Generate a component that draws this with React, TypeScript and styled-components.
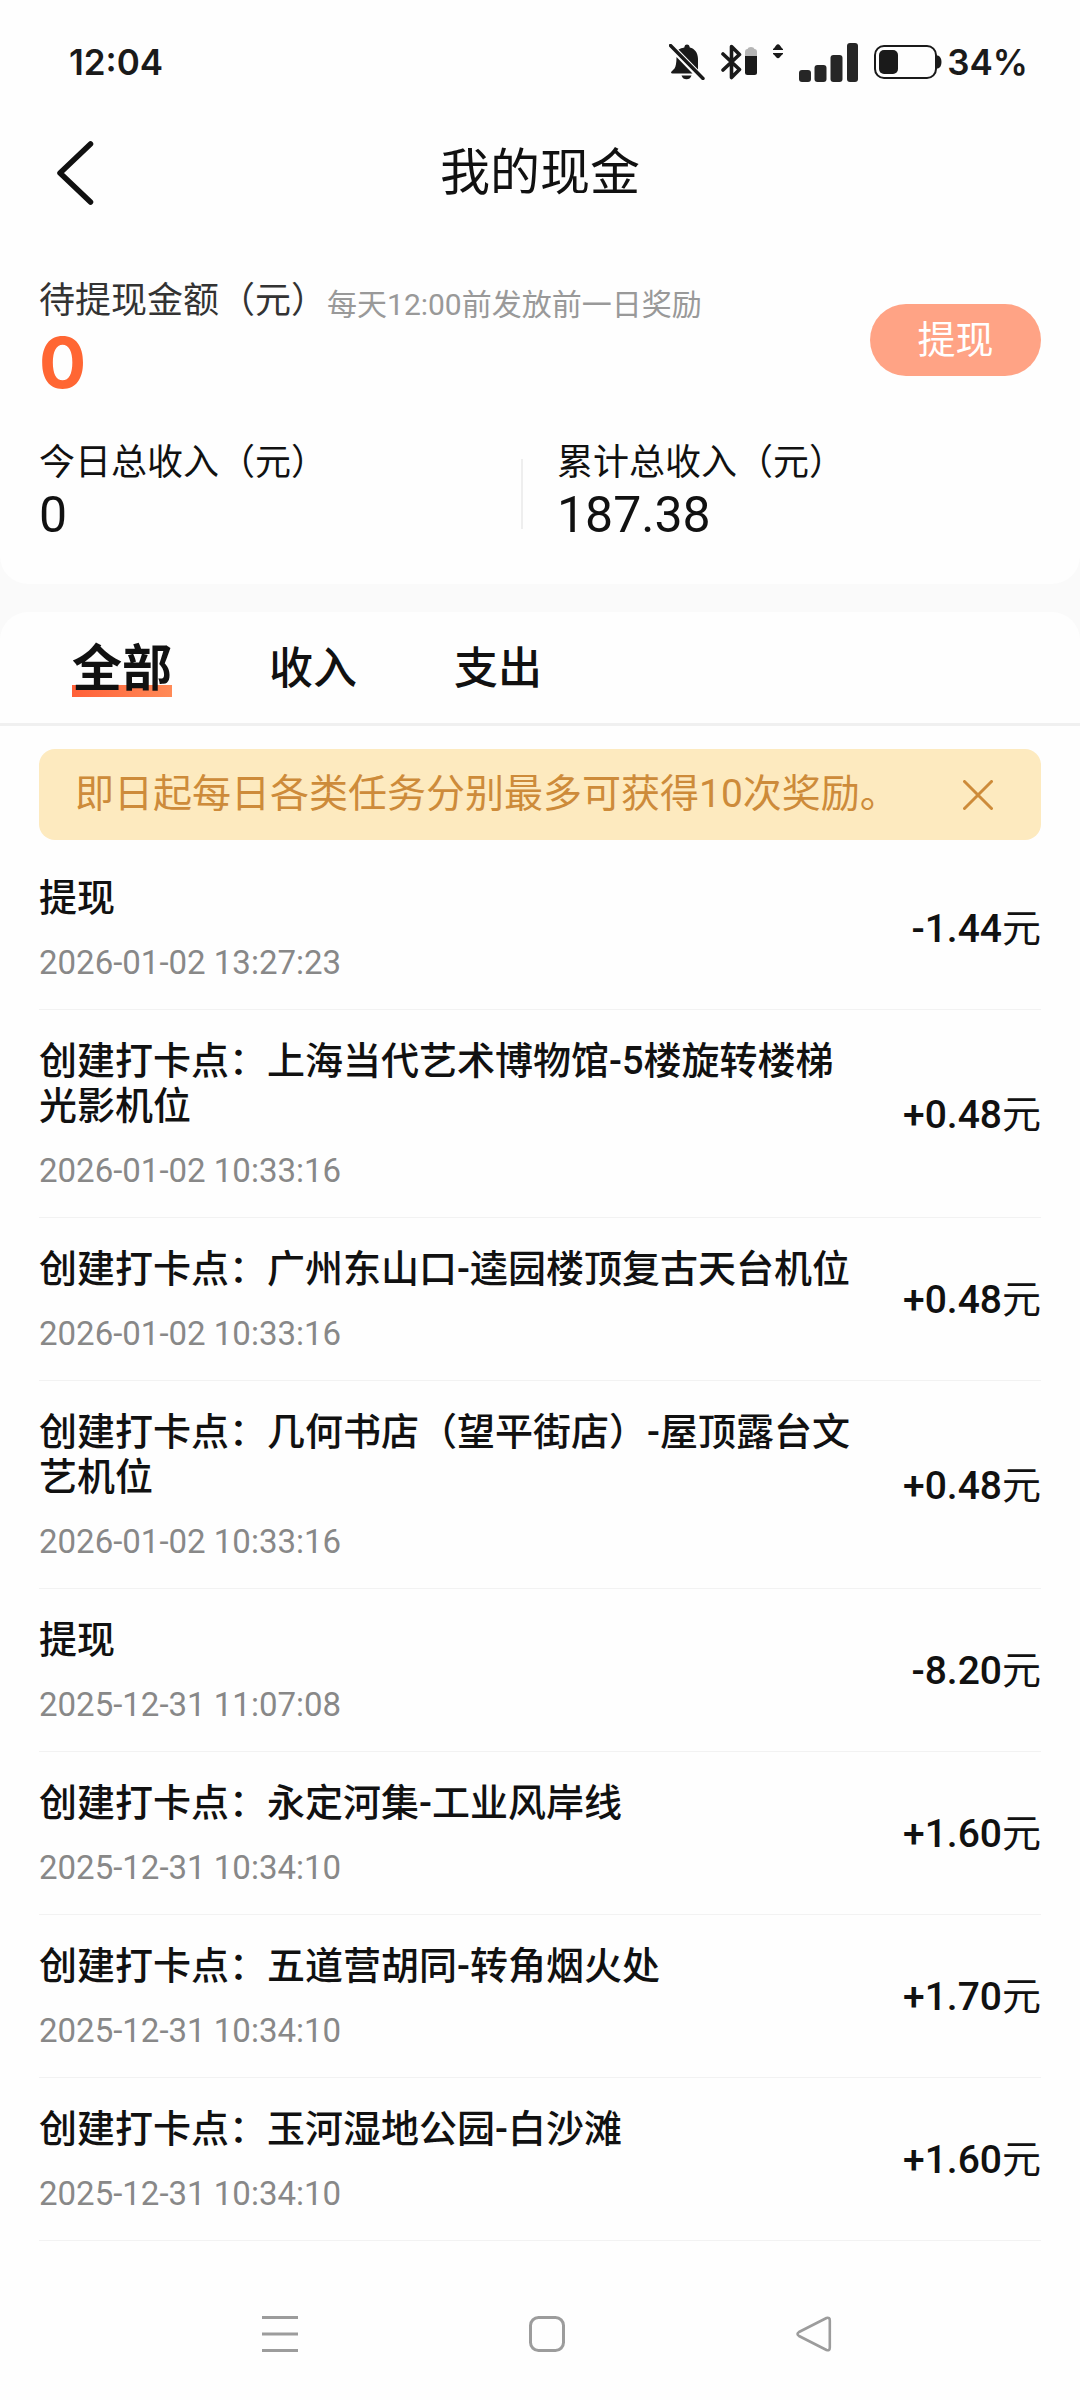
import React, { useState } from "react";
import styled, { createGlobalStyle } from "styled-components";

const GlobalStyle = createGlobalStyle`
  * { box-sizing: border-box; }
  body {
    margin: 0;
    background: #fefefe;
    color: #111;
    font-family: Roboto, "Noto Sans CJK SC", sans-serif;
  }
  button {
    margin: 0;
    padding: 0;
    border: 0;
    background: none;
    color: inherit;
    font: inherit;
    cursor: pointer;
  }
  svg { display: block; }
`;

const Page = styled.div`
  display: flex;
  flex-direction: column;
  min-height: 100vh;
`;

const StatusBar = styled.div`
  display: flex;
  align-items: center;
  justify-content: space-between;
  height: 124px;
  padding: 0 52px 0 69px;
  color: #1a1a1a;
  font-family: Inter, Roboto, sans-serif;
  font-size: 35px;
  font-weight: 600;
  line-height: 44px;
`;

const StatusIcons = styled.div`
  display: flex;
  align-items: center;
  gap: 16px;
`;

const Battery = styled.div`
  display: flex;
  align-items: center;
  gap: 5px;
`;

const Header = styled.header`
  display: grid;
  grid-template-columns: 1fr auto 1fr;
  align-items: center;
  height: 98px;
  padding: 0 54px;
`;

const BackButton = styled.button`
  justify-self: start;
`;

const Title = styled.h1`
  margin: 0;
  font-size: 50px;
  font-weight: 400;
  line-height: 64px;
`;

const Band = styled.main`
  background: #fafafa;
`;

const Summary = styled.section`
  padding: 53px 39px 40px;
  border-radius: 0 0 28px 28px;
  background: #fefefe;
`;

const Pending = styled.div`
  display: flex;
  align-items: center;
  justify-content: space-between;
  height: 130px;
  margin-bottom: 35px;
`;

const PendingLabel = styled.div`
  display: flex;
  align-items: flex-end;
`;

const Label = styled.div<{ $soft?: boolean }>`
  color: ${(p) => (p.$soft ? "#333" : "#111")};
  font-size: 36px;
  line-height: 46px;
`;

const Hint = styled.div`
  color: #999;
  font-size: 30px;
  line-height: 38px;
`;

const PendingValue = styled.div`
  color: #ff6633;
  font-family: Inter, Roboto, sans-serif;
  font-size: 70px;
  font-weight: 700;
  line-height: 78px;
`;

const WithdrawButton = styled.button`
  width: 171px;
  height: 72px;
  border-radius: 36px;
  background: #ffa385;
  color: #fff;
  font-size: 38px;
  line-height: 45px;
`;

const Stats = styled.div`
  display: grid;
  grid-template-columns: 1fr 1fr;
`;

const Stat = styled.div`
  display: flex;
  align-items: center;

  & + &::before {
    content: "";
    width: 2px;
    height: 70px;
    margin: 4px 34px 0 -19px;
    background: #eee;
  }
`;

const StatValue = styled.div`
  font-size: 50px;
  line-height: 58px;
`;

const Records = styled.section`
  margin-top: 28px;
  border-radius: 28px 28px 0 0;
  background: #fefefe;
`;

const Tabs = styled.div`
  display: flex;
  align-items: center;
  gap: 97px;
  height: 114px;
  padding: 2px 72px 0;
  border-bottom: 3px solid #f0f0f0;
`;

const Tab = styled.button<{ $active: boolean }>`
  font-size: ${(p) => (p.$active ? 50 : 44)}px;
  font-weight: ${(p) => (p.$active ? 700 : 500)};
  line-height: 60px;
  background: ${(p) =>
    p.$active
      ? "linear-gradient(90deg, #ff6038, #ff8a57) 0 46px / 100% 12px no-repeat"
      : "none"};
`;

const Notice = styled.div`
  display: flex;
  align-items: center;
  justify-content: space-between;
  margin: 23px 39px 7px;
  padding: 0 48px 0 36px;
  height: 91px;
  border-radius: 16px;
  background: #fdeabf;
  color: #cd8b3a;
  font-size: 39px;
  line-height: 45px;
`;

const List = styled.ul`
  margin: 0;
  padding: 0 39px;
  list-style: none;
`;

const Row = styled.li`
  display: flex;
  align-items: center;
  justify-content: space-between;
  padding: 29px 0 26px;
  border-bottom: 1px solid #f2f2f2;
`;

const RowText = styled.div`
  max-width: 824px;
`;

const RowTitle = styled.div`
  margin-bottom: 22px;
  font-size: 38px;
  font-weight: 500;
  line-height: 45px;
`;

const RowDate = styled.time`
  display: block;
  color: #888;
  font-size: 33px;
  line-height: 40px;
`;

const Amount = styled.div`
  font-size: 39px;
  font-weight: 500;
  line-height: 45px;
  white-space: nowrap;
`;

const Unit = styled.span`
  font-weight: 400;
`;

const SystemNav = styled.nav`
  display: grid;
  grid-template-columns: repeat(3, 1fr);
  justify-items: center;
  margin-top: auto;
  padding: 75px 132px 49px 146px;
  color: #9c9c9c;
`;

const BellOffIcon = () => (
  <svg width="36" height="36" viewBox="0 0 36 36" fill="currentColor" aria-hidden="true">
    <path d="M9.500 5.500 L29 25.500 V15 C29 8.500 25.500 4.500 20.800 3.400 C20.300 1.200 19.300 .6 18 .6 C16.700 .6 15.700 1.200 15.300 3.400 C13 3.900 11 4.500 9.500 5.500 Z" />
    <path d="M7.500 13 L23.500 29.500 H3.500 C2 29.500 1.700 28.500 2.500 27.500 L5.500 24.500 C6.800 22.500 7.500 19 7.500 13 Z" />
    <path d="M12.500 31.500 H22.500 C21.500 34.500 20 35.200 17.500 35.200 C15 35.200 13.500 34.500 12.500 31.500 Z" />
    <path d="M1.500 1.500 L34 34.500" stroke="currentColor" strokeWidth="3.400" strokeLinecap="round" />
  </svg>
);

const BluetoothIcon = () => (
  <svg width="36" height="36" viewBox="0 0 36 36" aria-hidden="true">
    <path
      d="M2 10 L18.500 25.500 L10.500 33.500 V2.500 L18.500 10.500 L2 26"
      fill="none"
      stroke="currentColor"
      strokeWidth="3.600"
      strokeLinecap="round"
      strokeLinejoin="round"
    />
    <path d="M24 13 V8 Q24 5 26.500 5 Q27 3 30 3 Q33 3 33.500 5 Q36 5 36 8 V13 Z" fill="#b5b5b5" />
    <path d="M24 12 H36 V28.500 Q36 31 33.500 31 H26.500 Q24 31 24 28.500 Z" fill="currentColor" />
  </svg>
);

const DataIcon = () => (
  <svg width="10" height="36" viewBox="0 0 10 36" fill="currentColor" aria-hidden="true">
    <path d="M0 5 Q1.500 4 3 1.500 Q5 -1 7 1.500 Q8.500 4 10 5 V6 H0 Z" />
    <path d="M0 9 H10 V10 Q8.500 11 7 13 Q5 15.500 3 13 Q1.500 11 0 10 Z" />
  </svg>
);

const SignalIcon = () => (
  <svg width="59" height="39" viewBox="0 0 59 39" fill="#262626" aria-hidden="true">
    <rect x="0" y="27" width="12" height="12" rx="3" />
    <rect x="15.500" y="22" width="12" height="17" rx="3" />
    <rect x="31.500" y="12" width="12" height="27" rx="3" />
    <rect x="48" y="0" width="11" height="39" rx="3" />
  </svg>
);

const BatteryIcon = () => (
  <svg width="68" height="34" viewBox="0 0 68 34" fill="currentColor" aria-hidden="true">
    <rect x="1" y="1" width="61" height="32" rx="9" fill="none" stroke="currentColor" strokeWidth="2" />
    <rect x="5" y="5" width="19" height="24" rx="5" />
    <path d="M62.500 10.500 H64 Q67.500 12 67.500 17 Q67.500 22 64 23.500 H62.500 Z" />
  </svg>
);

const BackIcon = () => (
  <svg width="42" height="64" viewBox="0 0 42 64" aria-hidden="true">
    <path
      d="M36.500 3 L6 32 L36.500 61"
      fill="none"
      stroke="#111"
      strokeWidth="5.500"
      strokeLinecap="round"
      strokeLinejoin="round"
    />
  </svg>
);

const CloseIcon = () => (
  <svg width="30" height="30" viewBox="0 0 30 30" aria-hidden="true">
    <path d="M1.500 1.500 L28.500 28.500 M28.500 1.500 L1.500 28.500" stroke="currentColor" strokeWidth="3" strokeLinecap="round" />
  </svg>
);

const RecentsIcon = () => (
  <svg width="36" height="36" viewBox="0 0 36 36" fill="currentColor" aria-hidden="true">
    <path d="M0 0 H36 V3 H0 Z M0 16.500 H36 V19.500 H0 Z M0 33 H36 V36 H0 Z" />
  </svg>
);

const HomeIcon = () => (
  <svg width="36" height="36" viewBox="0 0 36 36" aria-hidden="true">
    <rect x="1.500" y="1.500" width="33" height="33" rx="8" fill="none" stroke="currentColor" strokeWidth="3" />
  </svg>
);

const NavBackIcon = () => (
  <svg width="36" height="36" viewBox="0 0 36 36" aria-hidden="true">
    <path
      d="M3 16 L30.500 2 Q33.800 1 33.800 4.500 V31.500 Q33.800 35 30.500 34 L3 20 Q0 18 3 16 Z"
      fill="none"
      stroke="currentColor"
      strokeWidth="2.600"
      strokeLinejoin="round"
    />
  </svg>
);

const TABS = ["全部", "收入", "支出"];

const RECORDS = [
  { title: "提现", date: "2026-01-02 13:27:23", amount: "-1.44" },
  { title: "创建打卡点：上海当代艺术博物馆-5楼旋转楼梯光影机位", date: "2026-01-02 10:33:16", amount: "+0.48" },
  { title: "创建打卡点：广州东山口-逵园楼顶复古天台机位", date: "2026-01-02 10:33:16", amount: "+0.48" },
  { title: "创建打卡点：几何书店（望平街店）-屋顶露台文艺机位", date: "2026-01-02 10:33:16", amount: "+0.48" },
  { title: "提现", date: "2025-12-31 11:07:08", amount: "-8.20" },
  { title: "创建打卡点：永定河集-工业风岸线", date: "2025-12-31 10:34:10", amount: "+1.60" },
  { title: "创建打卡点：五道营胡同-转角烟火处", date: "2025-12-31 10:34:10", amount: "+1.70" },
  { title: "创建打卡点：玉河湿地公园-白沙滩", date: "2025-12-31 10:34:10", amount: "+1.60" },
];

export default function App() {
  const [tab, setTab] = useState(TABS[0]);
  const [noticeOpen, setNoticeOpen] = useState(true);
  const shown = RECORDS.filter(
    (r) => tab === "全部" || (tab === "收入") === r.amount.startsWith("+")
  );

  return (
    <Page lang="zh-CN">
      <GlobalStyle />
      <StatusBar>
        <span>12:04</span>
        <StatusIcons>
          <BellOffIcon />
          <BluetoothIcon />
          <DataIcon />
          <SignalIcon />
          <Battery>
            <BatteryIcon />
            <span>34%</span>
          </Battery>
        </StatusIcons>
      </StatusBar>
      <Header>
        <BackButton aria-label="返回">
          <BackIcon />
        </BackButton>
        <Title>我的现金</Title>
      </Header>
      <Band>
        <Summary>
          <Pending>
            <div>
              <PendingLabel>
                <Label $soft>待提现金额（元）</Label>
                <Hint>每天12:00前发放前一日奖励</Hint>
              </PendingLabel>
              <PendingValue>0</PendingValue>
            </div>
            <WithdrawButton>提现</WithdrawButton>
          </Pending>
          <Stats>
            <Stat>
              <div>
                <Label>今日总收入（元）</Label>
                <StatValue>0</StatValue>
              </div>
            </Stat>
            <Stat>
              <div>
                <Label>累计总收入（元）</Label>
                <StatValue>187.38</StatValue>
              </div>
            </Stat>
          </Stats>
        </Summary>
        <Records>
          <Tabs role="tablist">
            {TABS.map((name) => (
              <Tab
                key={name}
                role="tab"
                aria-selected={name === tab}
                $active={name === tab}
                onClick={() => setTab(name)}
              >
                {name}
              </Tab>
            ))}
          </Tabs>
          {noticeOpen && (
            <Notice>
              <span>即日起每日各类任务分别最多可获得10次奖励。</span>
              <button aria-label="关闭" onClick={() => setNoticeOpen(false)}>
                <CloseIcon />
              </button>
            </Notice>
          )}
          <List>
            {shown.map((r, i) => (
              <Row key={i}>
                <RowText>
                  <RowTitle>{r.title}</RowTitle>
                  <RowDate>{r.date}</RowDate>
                </RowText>
                <Amount>
                  {r.amount}
                  <Unit>元</Unit>
                </Amount>
              </Row>
            ))}
          </List>
        </Records>
      </Band>
      <SystemNav>
        <button aria-label="最近任务">
          <RecentsIcon />
        </button>
        <button aria-label="主屏幕">
          <HomeIcon />
        </button>
        <button aria-label="返回上一页">
          <NavBackIcon />
        </button>
      </SystemNav>
    </Page>
  );
}
